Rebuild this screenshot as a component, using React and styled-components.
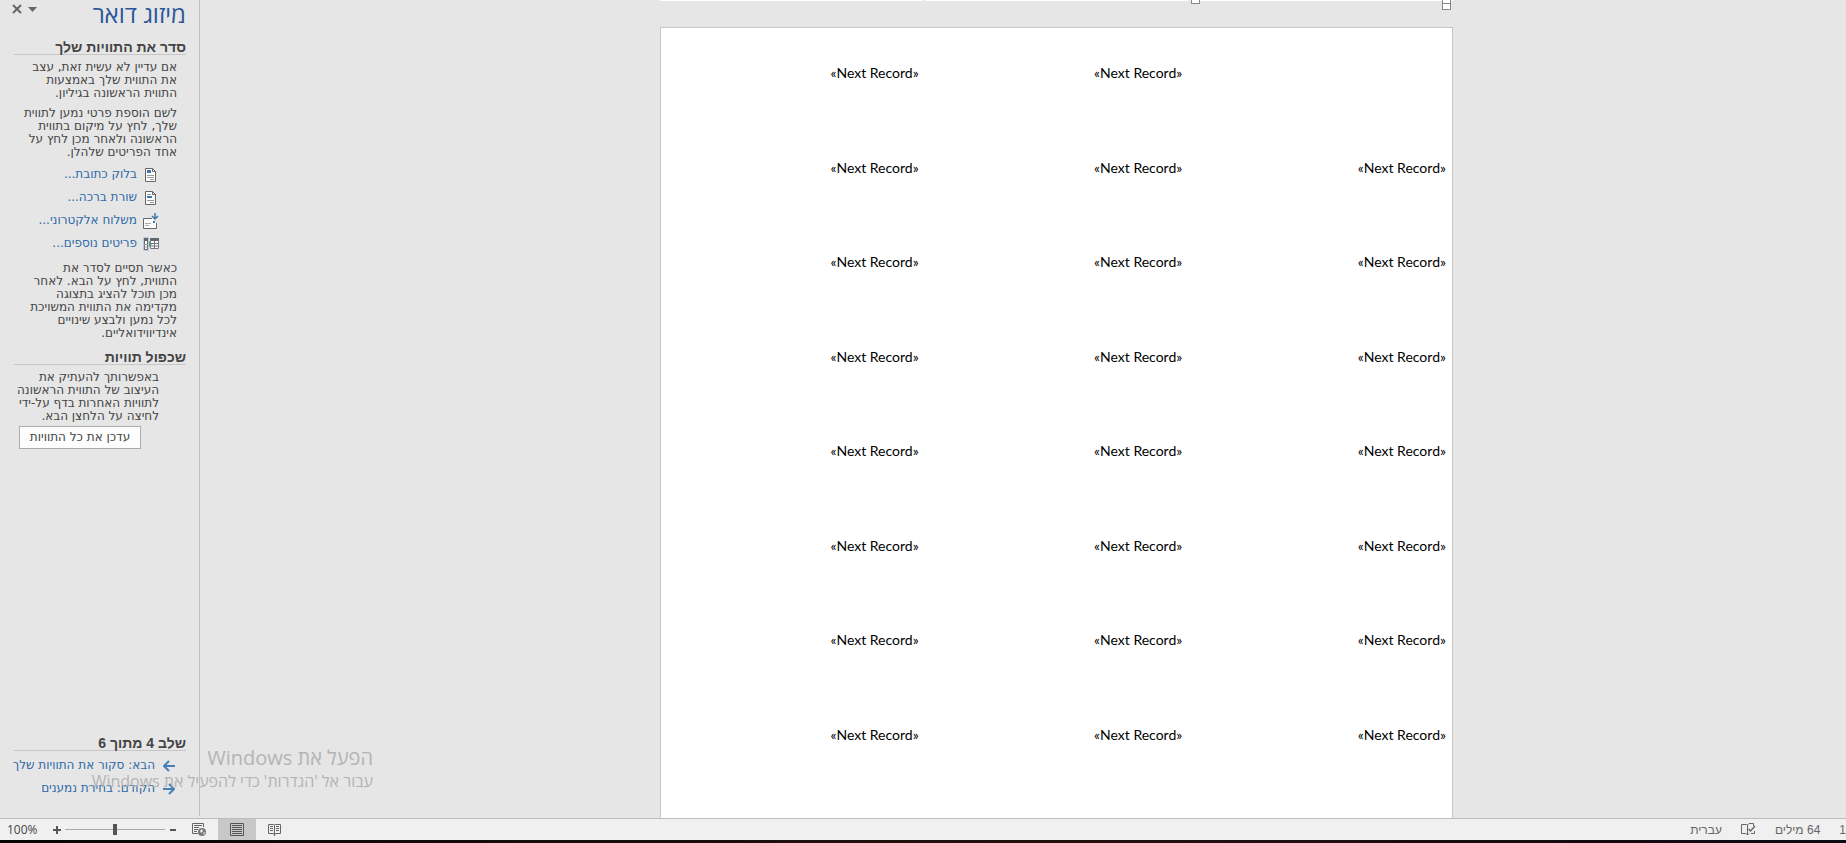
import React, { useState } from "react";
import styled, { createGlobalStyle } from "styled-components";

const fieldLinks = [
  { label: "בלוק כתובת...", icon: "address" },
  { label: "שורת ברכה...", icon: "greeting" },
  { label: "משלוח אלקטרוני...", icon: "postage" },
  { label: "פריטים נוספים...", icon: "more" },
];

const labelRows = Array.from({ length: 8 }, (_, row) =>
  [0, 1, 2].map((col) => (row === 0 && col === 2 ? "" : "«Next Record»"))
);

function FieldIcon({ name }) {
  if (name === "postage") {
    return (
      <svg width="16" height="16" viewBox="0 0 16 16" fill="none">
        <path d="M9 5.500H.5V15.500H13.500V10" fill="#fafafa" stroke="#666" />
        <path d="M2 10.500H8M2 12.500H6" stroke="#aaa" />
        <path d="M12 0V6M9 3L12 6L15 3" stroke="#3f78b5" strokeWidth="1.500" />
        <path d="M10 8H12V10H10Z" fill="#3f78b5" />
      </svg>
    );
  }
  if (name === "more") {
    return (
      <svg width="16" height="16" viewBox="0 0 16 16" fill="none">
        <path d="M0 1H6V15H0Z" fill="#b5cbe5" />
        <path d="M1.500 2.500H4.500V13.500H1.500Z" fill="#fff" stroke="#666" />
        <path d="M7 4H16V13H7Z" fill="#fff" />
        <path d="M1 2H5V5H1ZM7 2H16V5H7Z" fill="#5f6670" />
        <path d="M1 8.500H5M1 11H5" stroke="#999" />
        <path d="M7.500 4V12.500H15.500V4M11.500 5V13M7 7.500H16M7 10H16" stroke="#777" />
        <path d="M6 5V11L9 8Z" fill="#4f9b76" />
      </svg>
    );
  }
  return (
    <svg width="16" height="16" viewBox="0 0 16 16" fill="none">
      <path d="M2.500 1.500H9.500L12.500 4.500V14.500H2.500Z" fill="#fff" stroke="#666" />
      <path d="M9.500 1.500V4.500H12.500" stroke="#666" />
      {name === "address" ? (
        <>
          <path d="M4 3H8V6H4Z" fill="#3f78b5" />
          <path d="M4 8.500H11M4 10.500H11M7 12.500H11" stroke="#999" />
        </>
      ) : (
        <>
          <path d="M4 6H9V8H4Z" fill="#3f78b5" />
          <path d="M4 4.500H8M4 10.500H11M7 12.500H11" stroke="#999" />
        </>
      )}
    </svg>
  );
}

function ArrowIcon({ back }) {
  return (
    <svg width="12" height="12" viewBox="0 0 12 12" fill="none" stroke="#4a7ebb" strokeWidth="2">
      <path d={back ? "M0 6H11M6 1L11 6L6 11" : "M12 6H1M6 1L1 6L6 11"} />
    </svg>
  );
}

function WebIcon() {
  return (
    <svg width="15" height="14" viewBox="0 0 15 14" fill="none">
      <path d="M6 10.500H.5V.5H11.500V4" stroke="#666" />
      <path d="M2 2.500H10M2 4.500H7M2 6.500H6M2 8.500H5" stroke="#666" />
      <circle cx="10" cy="9" r="4" fill="#777" />
      <path d="M8 8L10 6L11 8L9 10ZM11 10L13 9L12 12Z" fill="#f0f0f0" />
    </svg>
  );
}

function PrintIcon() {
  return (
    <svg width="14" height="14" viewBox="0 0 14 14" fill="none" stroke="#555">
      <path d="M.5 .5H13.500V12.500H.5ZM2 2.500H12M2 4.500H12M2 6.500H12M2 8.500H12M2 10.500H12" />
    </svg>
  );
}

function ReadIcon() {
  return (
    <svg width="14" height="14" viewBox="0 0 14 14" fill="none" stroke="#666">
      <path d="M6.500 2L5.500 1.500H.5V10.500H5.500L6.500 12L7.500 10.500H12.500V1.500H7.500L6.500 2V13" />
      <path d="M2 3.500H5M2 5.500H5M2 7.500H5M8 3.500H11M8 5.500H11M8 7.500H11" />
    </svg>
  );
}

function ProofIcon() {
  return (
    <svg width="15" height="14" viewBox="0 0 15 14" fill="none" stroke="#666">
      <path d="M6.500 12V2L5.500 1.500H.5V10.500H5L6.500 12L8 10.500M6.500 2L8 .5H12.500V3M13.500 8V10.500H10" />
      <path d="M7.500 6L9.500 8L14 3" strokeWidth="1.500" />
    </svg>
  );
}

export default function App() {
  const [zoom, setZoom] = useState(100);

  return (
    <>
      <GlobalStyle />
      <Window>
        <Workspace>
          <Panel dir="rtl">
            <PanelHeader>
              <h1>מיזוג דואר</h1>
              <PanelTools>
                <IconButton aria-label="אפשרויות חלונית">
                  <svg width="9" height="5" viewBox="0 0 9 5">
                    <path d="M0 0H9L4.500 5Z" fill="#666" />
                  </svg>
                </IconButton>
                <IconButton aria-label="סגור">
                  <svg width="10" height="10" viewBox="0 0 10 10" stroke="#666" strokeWidth="2">
                    <path d="M1 1L9 9M9 1L1 9" />
                  </svg>
                </IconButton>
              </PanelTools>
            </PanelHeader>
            <SectionTitle>סדר את התוויות שלך</SectionTitle>
            <Text>{`אם עדיין לא עשית זאת, עצב
את התווית שלך באמצעות
התווית הראשונה בגיליון.`}</Text>
            <Text>{`לשם הוספת פרטי נמען לתווית
שלך, לחץ על מיקום בתווית
הראשונה ולאחר מכן לחץ על
אחד הפריטים שלהלן.`}</Text>
            <FieldList>
              {fieldLinks.map((link) => (
                <li key={link.icon}>
                  <PanelLink href="#">
                    <FieldIcon name={link.icon} />
                    {link.label}
                  </PanelLink>
                </li>
              ))}
            </FieldList>
            <Text>{`כאשר תסיים לסדר את
התווית, לחץ על הבא. לאחר
מכן תוכל להציג בתצוגה
מקדימה את התווית המשויכת
לכל נמען ולבצע שינויים
אינדיווידואליים.`}</Text>
            <SectionTitle>שכפול תוויות</SectionTitle>
            <Text $indent>{`באפשרותך להעתיק את
העיצוב של התווית הראשונה
לתוויות האחרות בדף על-ידי
לחיצה על הלחצן הבא.`}</Text>
            <UpdateButton>עדכן את כל התוויות</UpdateButton>
            <Steps>
              <SectionTitle>שלב 4 מתוך 6</SectionTitle>
              <PanelLink href="#">
                <ArrowIcon />
                הבא: סקור את התוויות שלך
              </PanelLink>
              <PanelLink href="#">
                <ArrowIcon back />
                הקודם: בחירת נמענים
              </PanelLink>
            </Steps>
          </Panel>
          <Canvas>
            <PreviousPage>
              <span />
              <span />
              <span />
              <MoveHandle />
              <ResizeHandle />
            </PreviousPage>
            <Page>
              <Labels>
                <tbody>
                  {labelRows.map((row, index) => (
                    <tr key={index}>
                      {row.map((text, col) => (
                        <td key={col}>{text}</td>
                      ))}
                    </tr>
                  ))}
                </tbody>
              </Labels>
            </Page>
          </Canvas>
          <Watermark dir="rtl">
            <strong>הפעל את Windows</strong>
            <span>עבור אל 'הגדרות' כדי להפעיל את Windows.</span>
          </Watermark>
        </Workspace>
        <StatusBar>
          <ZoomValue>{zoom}%</ZoomValue>
          <ZoomButton aria-label="הגדל" onClick={() => setZoom(Math.min(zoom + 10, 200))}>
            <svg width="8" height="8" viewBox="0 0 8 8" stroke="#555" strokeWidth="2">
              <path d="M0 4H8M4 0V8" />
            </svg>
          </ZoomButton>
          <ZoomSlider
            type="range"
            aria-label="זום"
            min="0"
            max="200"
            value={zoom}
            onChange={(e) => setZoom(Number(e.target.value))}
          />
          <ZoomButton aria-label="הקטן" onClick={() => setZoom(Math.max(zoom - 10, 10))}>
            <svg width="8" height="8" viewBox="0 0 8 8" stroke="#555" strokeWidth="2">
              <path d="M1 4H7" />
            </svg>
          </ZoomButton>
          <Views>
            <ViewButton aria-label="פריסת אינטרנט">
              <WebIcon />
            </ViewButton>
            <ViewButton aria-label="פריסת הדפסה" $active>
              <PrintIcon />
            </ViewButton>
            <ViewButton aria-label="מצב קריאה">
              <ReadIcon />
            </ViewButton>
          </Views>
          <Info>
            <span>עברית</span>
            <ProofIcon />
            <span dir="rtl">64 מילים</span>
            <span>1</span>
          </Info>
        </StatusBar>
        <Taskbar />
      </Window>
    </>
  );
}

const GlobalStyle = createGlobalStyle`
  * {
    box-sizing: border-box;
  }
  body {
    margin: 0;
    overflow: hidden;
    font-family: "Liberation Sans", sans-serif;
    font-size: 12px;
    color: #444;
    background: #e6e6e6;
  }
  button {
    font: inherit;
    color: inherit;
    border: none;
    background: none;
    padding: 0;
  }
`;

const Window = styled.div`
  display: flex;
  flex-direction: column;
  height: 100vh;
`;

const Workspace = styled.div`
  position: relative;
  display: flex;
  flex: 1;
  min-height: 0;
`;

const Panel = styled.aside`
  display: flex;
  flex-direction: column;
  flex: none;
  width: 200px;
  margin-bottom: 2px;
  padding: 0 13px 0 14px;
  border-right: 1px solid #c0c0c0;
  font-family: "DejaVu Sans", sans-serif;
  font-size: 12px;
  line-height: 13px;
`;

const PanelHeader = styled.header`
  display: flex;
  justify-content: space-between;
  height: 37px;
  h1 {
    margin: 0;
    color: #2b579a;
    font-family: "Open Sans", sans-serif;
    font-size: 24px;
    font-weight: normal;
    line-height: 28px;
  }
`;

const PanelTools = styled.div`
  display: flex;
  align-items: center;
  gap: 6px;
  height: 18px;
  margin-left: -2px;
`;

const IconButton = styled.button`
  display: flex;
`;

const SectionTitle = styled.h2`
  margin: 3px 0 6px;
  border-bottom: 1px solid #c6c6c6;
  font-family: "Liberation Sans", sans-serif;
  font-size: 14px;
  line-height: 14px;
  white-space: nowrap;
`;

const Text = styled.p`
  margin: 0 ${(p) => (p.$indent ? 27 : 9)}px ${(p) => (p.$indent ? 3 : 7)}px 0;
  white-space: pre;
`;

const FieldList = styled.ul`
  margin: -3px 27px 7px 0;
  padding: 0;
  list-style: none;
`;

const PanelLink = styled.a`
  display: flex;
  align-items: center;
  gap: 6px;
  height: 23px;
  color: #2e6aa8;
  text-decoration: none;
  white-space: nowrap;
  svg {
    flex: none;
  }
`;

const UpdateButton = styled.button`
  align-self: flex-end;
  width: 122px;
  height: 23px;
  margin-left: 5px;
  border: 1px solid #ababab;
  background: #fdfdfd;
  white-space: nowrap;
`;

const Steps = styled.nav`
  margin-top: auto;
  padding-bottom: 16px;
  ${SectionTitle} {
    margin-bottom: 3px;
  }
  ${PanelLink} {
    margin-right: 11px;
    gap: 8px;
  }
`;

const Canvas = styled.main`
  display: flex;
  flex: 1;
  flex-direction: column;
  align-items: center;
  padding-left: 67px;
  overflow: hidden;
`;

const PreviousPage = styled.div`
  position: relative;
  display: flex;
  flex: none;
  gap: 2px;
  width: 793px;
  height: 27px;
  span {
    flex: 1;
    height: 1px;
    background: #fff;
  }
`;

const MoveHandle = styled.i`
  position: absolute;
  left: 67%;
  top: 0;
  width: 9px;
  height: 4px;
  border: 1px solid #888;
  border-top: none;
  background: #fff;
`;

const ResizeHandle = styled(MoveHandle)`
  left: auto;
  right: 2px;
  height: 10px;
  background: linear-gradient(#888, #888) 0 3px / 100% 1px no-repeat #fff;
`;

const Page = styled.article`
  flex: 1;
  width: 793px;
  border: 1px solid #c6c6c6;
  border-bottom: none;
  background: #fff;
`;

const Labels = styled.table`
  width: 100%;
  height: 756px;
  border-collapse: collapse;
  table-layout: fixed;
  color: #000;
  font-family: Lato, sans-serif;
  font-size: 14px;
  line-height: 18px;
  td {
    padding: 0 6px 4px 0;
    text-align: right;
  }
`;

const Watermark = styled.div`
  position: absolute;
  left: 97px;
  bottom: 27px;
  display: flex;
  flex-direction: column;
  width: 276px;
  color: #b4b4b4;
  font-family: "Open Sans", sans-serif;
  font-size: 16px;
  line-height: 20px;
  white-space: nowrap;
  pointer-events: none;
  strong {
    font-size: 20px;
    font-weight: normal;
    line-height: 26px;
  }
`;

const StatusBar = styled.footer`
  display: flex;
  align-items: center;
  flex: none;
  height: 22px;
  border-top: 1px solid #bdbdbd;
  background: #f0f0f0;
`;

const ZoomValue = styled.span`
  width: 45px;
  padding-left: 7px;
  font-family: "Open Sans", sans-serif;
`;

const ZoomButton = styled.button`
  display: flex;
  justify-content: center;
  width: 24px;
`;

const ZoomSlider = styled.input`
  appearance: none;
  width: 100px;
  height: 12px;
  margin: 0 -4px;
  background: linear-gradient(#aaa, #aaa) center / 100% 1px no-repeat;
  &::-webkit-slider-thumb {
    appearance: none;
    width: 4px;
    height: 11px;
    background: #555;
  }
`;

const Views = styled.div`
  display: flex;
  align-self: stretch;
  margin-left: -5px;
`;

const ViewButton = styled.button`
  display: flex;
  align-items: center;
  justify-content: center;
  width: 38px;
  background: ${(p) => (p.$active ? "#c8c8c8" : "none")};
`;

const Info = styled.div`
  display: flex;
  align-items: center;
  gap: 19px;
  margin-left: auto;
  color: #666;
`;

const Taskbar = styled.div`
  flex: none;
  height: 3px;
  background: linear-gradient(90deg, #050505, #150d0a 30%, #241010 60%, #0a0810);
`;
